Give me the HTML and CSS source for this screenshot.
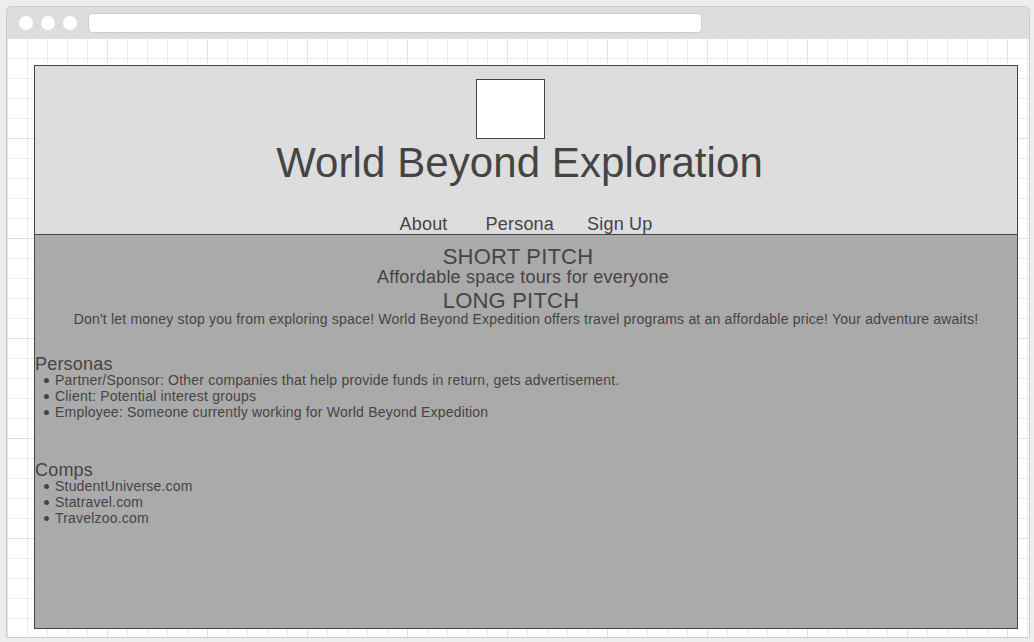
FILE: index.html
```html
<!DOCTYPE html>
<html>
<head>
<meta charset="utf-8">
<title>World Beyond Exploration</title>
<link rel="stylesheet" href="styles.css">
</head>
<body>
<div class="window">
  <div class="toolbar">
    <span class="dot"></span><span class="dot"></span><span class="dot"></span>
    <div class="address"></div>
  </div>
  <div class="canvas">
    <div class="app">
      <header class="header">
        <div class="logo"></div>
        <h1 class="title">World Beyond Exploration</h1>
        <nav class="nav">
          <a class="nav-link">About</a>
          <a class="nav-link nav-persona">Persona</a>
          <a class="nav-link nav-signup">Sign Up</a>
        </nav>
      </header>
      <main class="main">
        <h2 class="pitch-head short-head">SHORT PITCH</h2>
        <p class="short-text">Affordable space tours for everyone</p>
        <h2 class="pitch-head long-head">LONG PITCH</h2>
        <p class="long-text">Don't let money stop you from exploring space! World Beyond Expedition offers travel programs at an affordable price! Your adventure awaits!</p>
        <h3 class="section-title personas-title">Personas</h3>
        <ul class="list">
          <li>Partner/Sponsor: Other companies that help provide funds in return, gets advertisement.</li>
          <li>Client: Potential interest groups</li>
          <li>Employee: Someone currently working for World Beyond Expedition</li>
        </ul>
        <h3 class="section-title comps-title">Comps</h3>
        <ul class="list">
          <li>StudentUniverse.com</li>
          <li>Statravel.com</li>
          <li>Travelzoo.com</li>
        </ul>
      </main>
    </div>
  </div>
</div>
</body>
</html>
```
FILE: styles.css
```css
* { box-sizing: border-box; }
html, body { margin: 0; padding: 0; }
body {
  background: #ededed;
  font-family: "Liberation Sans", Arial, sans-serif;
  color: #444;
  width: 1034px;
  height: 642px;
  overflow: hidden;
  letter-spacing: 0.2px;
}
.window {
  margin: 6px 0 0 6px;
  width: 1024px;
  height: 632px;
  border: 1px solid #cccccc;
  border-radius: 5px 5px 0 0;
  background: #fff;
  display: flex;
  flex-direction: column;
  overflow: hidden;
}
.toolbar {
  height: 31px;
  flex: none;
  background: #dddddd;
  display: flex;
  align-items: center;
  padding-left: 12px;
}
.dot {
  width: 14px;
  height: 14px;
  border-radius: 50%;
  background: #fff;
  margin-right: 8px;
  flex: none;
}
.address {
  margin-left: 3px;
  width: 614px;
  height: 20px;
  background: #fff;
  border: 1px solid #cccccc;
  border-radius: 4px;
}
.canvas {
  flex: 1;
  background-color: #fff;
  background-image:
    linear-gradient(#e2e2e2 1px, transparent 1px),
    linear-gradient(90deg, #e2e2e2 1px, transparent 1px),
    linear-gradient(#ececec 1px, transparent 1px),
    linear-gradient(90deg, #ececec 1px, transparent 1px);
  background-size: 100px 100px, 100px 100px, 20px 20px, 20px 20px;
  padding: 27px 0 0 27px;
}
.app {
  width: 984px;
  height: 564px;
  border: 1px solid #444;
  display: flex;
  flex-direction: column;
}
.header {
  height: 169px;
  flex: none;
  background: #dddddd;
  border-bottom: 1px solid #444;
  display: flex;
  flex-direction: column;
  align-items: center;
  padding-top: 13px;
}
.logo {
  width: 69px;
  height: 60px;
  background: #fff;
  border: 1px solid #444;
  margin-right: 31px;
}
.title {
  margin: 0 13px 0 0;
  font-size: 42px;
  font-weight: normal;
  line-height: 48px;
  letter-spacing: 0.08px;
}
.nav {
  margin-top: auto;
  display: flex;
  font-size: 18px;
  line-height: 19px;
}
.nav-link { color: #444; }
.nav-persona { margin-left: 38px; }
.nav-signup { margin-left: 33px; }
.main {
  flex: 1;
  background: #aaaaaa;
  padding-top: 11px;
}
.pitch-head {
  margin: 0;
  font-size: 22px;
  font-weight: normal;
  line-height: 22px;
  text-align: center;
}
.short-head { padding-right: 16px; }
.long-head { padding-right: 30px; margin-top: 4px; }
.short-text {
  margin: 0;
  font-size: 18px;
  line-height: 18px;
  text-align: center;
  padding-right: 6px;
}
.long-text {
  margin: -1px 0 0;
  font-size: 14px;
  line-height: 16px;
  text-align: center;
}
.section-title {
  margin: 0;
  font-size: 18px;
  font-weight: normal;
  line-height: 16px;
}
.personas-title { margin-top: 29px; }
.comps-title { margin-top: 42px; }
.list {
  list-style: none;
  margin: 0;
  padding: 0;
  font-size: 14px;
  line-height: 16px;
}
.list li {
  display: flex;
  align-items: center;
}
.list li::before {
  content: "";
  width: 5px;
  height: 5px;
  border-radius: 50%;
  background: #444;
  margin: 0 6px 0 9px;
  flex: none;
}
```
